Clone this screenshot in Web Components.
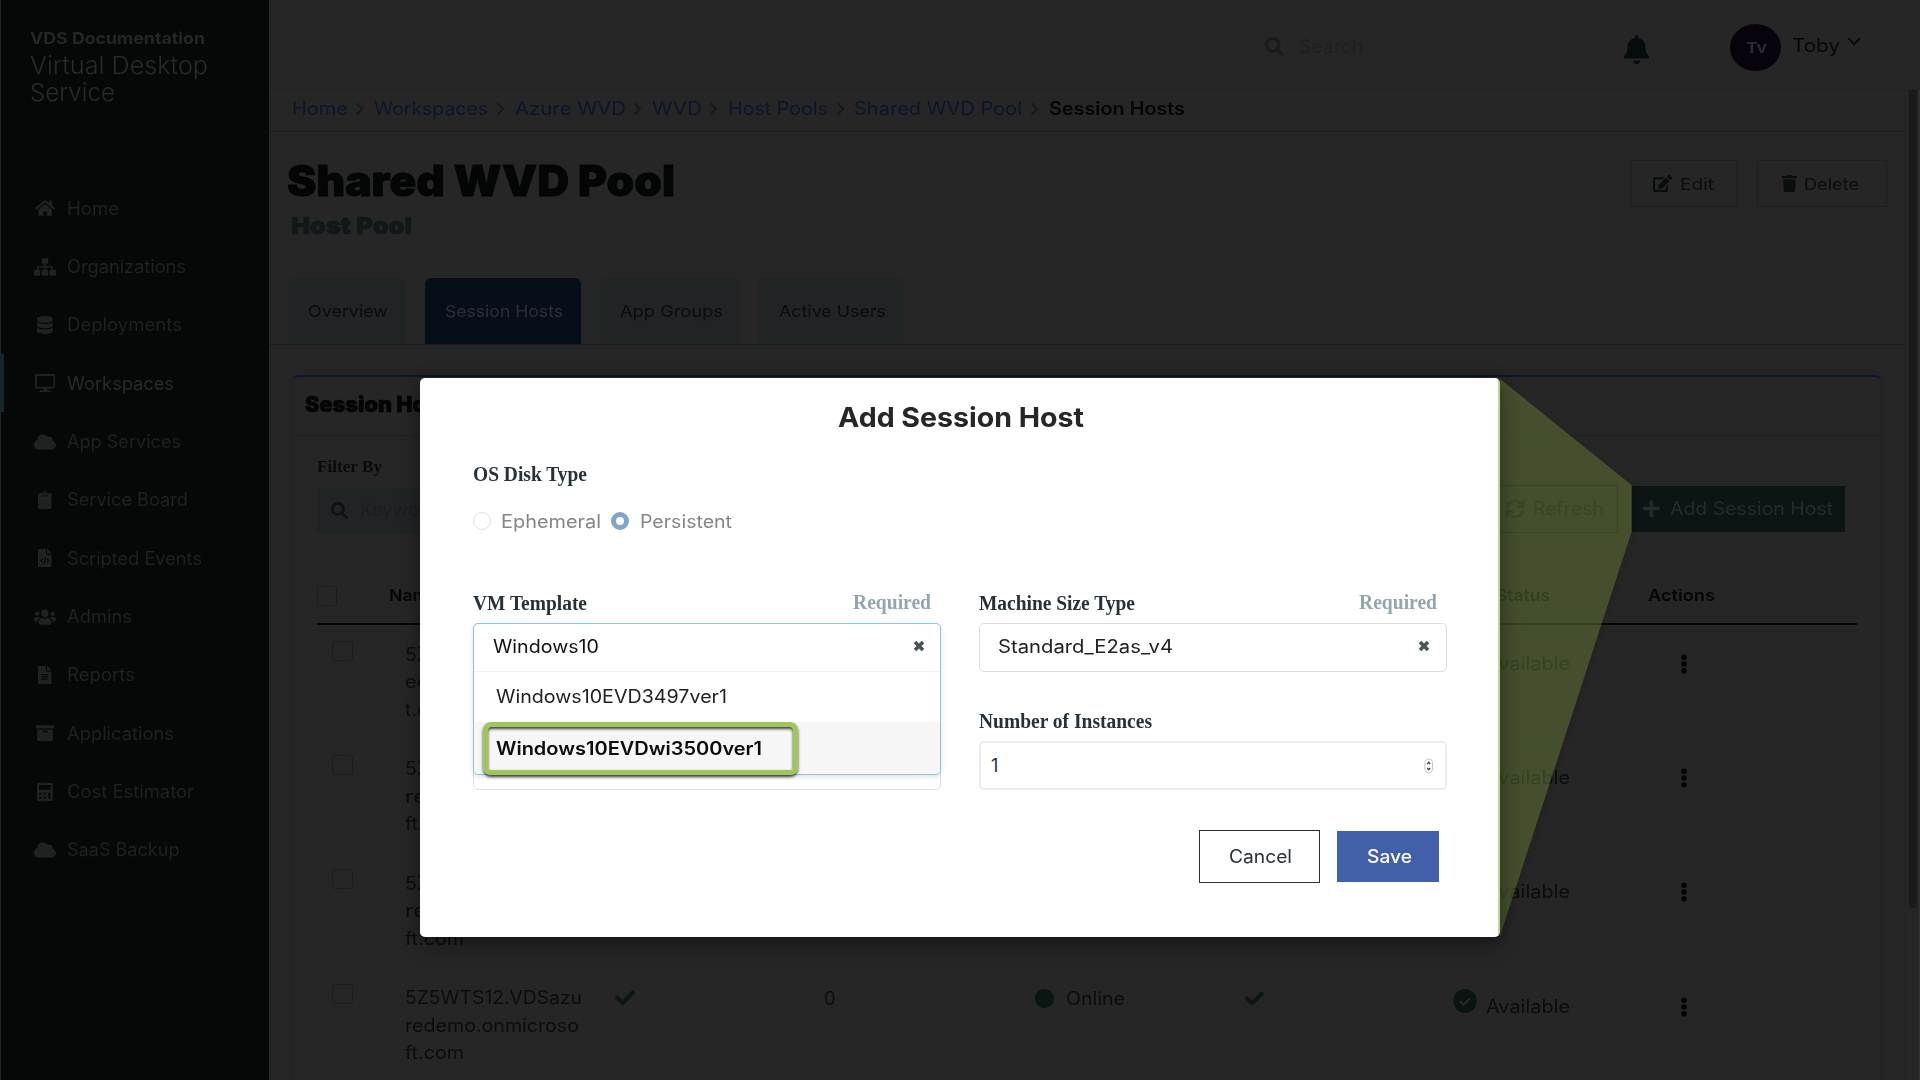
<!DOCTYPE html>
<html lang="en">
<head>
<meta charset="utf-8">
<title>Virtual Desktop Service</title>
<style>
html,body{margin:0;height:100%;overflow:hidden;background:#262626}
body{font-family:Inter,"Liberation Sans",sans-serif;font-size:18px;color:#0a0d0e}
</style>
</head>
<body>
<vds-app></vds-app>
<script>
const ICONS = {
  home:['0 0 576 512','<path d="M280.37 148.26L96 300.11V464a16 16 0 0 0 16 16l112.06-.29a16 16 0 0 0 15.92-16V368a16 16 0 0 1 16-16h64a16 16 0 0 1 16 16v95.64a16 16 0 0 0 16 16.05L464 480a16 16 0 0 0 16-16V300L295.67 148.26a12.19 12.19 0 0 0-15.3 0zM571.6 251.47L488 182.56V44.05a12 12 0 0 0-12-12h-56a12 12 0 0 0-12 12v72.61L318.47 43a48 48 0 0 0-61 0L4.34 251.47a12 12 0 0 0-1.6 16.9l25.5 31A12 12 0 0 0 45.15 301l235.22-193.74a12.19 12.19 0 0 1 15.3 0L530.9 301a12 12 0 0 0 16.9-1.6l25.5-31a12 12 0 0 0-1.7-16.93z"/>'],
  sitemap:['0 0 640 512','<rect x="224" y="0" width="192" height="160" rx="28"/><path d="M296 160h48v64h176a32 32 0 0 1 32 32v80h-48v-64H344v64h-48v-64H136v64H88v-80a32 32 0 0 1 32-32h176z"/><rect x="0" y="336" width="184" height="176" rx="28"/><rect x="228" y="336" width="184" height="176" rx="28"/><rect x="456" y="336" width="184" height="176" rx="28"/>'],
  database:['0 0 448 512','<path d="M448 73.143v45.714C448 159.143 347.667 192 224 192S0 159.143 0 118.857V73.143C0 32.857 100.333 0 224 0s224 32.857 224 73.143zM448 176v102.857C448 319.143 347.667 352 224 352S0 319.143 0 278.857V176c48.125 33.143 136.208 48.572 224 48.572S399.874 209.143 448 176zm0 160v102.857C448 479.143 347.667 512 224 512S0 479.143 0 438.857V336c48.125 33.143 136.208 48.572 224 48.572S399.874 369.143 448 336z"/>'],
  desktop:['0 0 576 512','<path d="M528 0H48C21.5 0 0 21.5 0 48v320c0 26.5 21.5 48 48 48h192l-16 48h-72c-13.3 0-24 10.7-24 24s10.7 24 24 24h272c13.3 0 24-10.7 24-24s-10.7-24-24-24h-72l-16-48h192c26.5 0 48-21.5 48-48V48c0-26.5-21.5-48-48-48zm-6 362H54V54h468v308z"/>'],
  cloud:['0 0 640 512','<path d="M537.6 226.6c4.1-10.7 6.4-22.4 6.4-34.6 0-53-43-96-96-96-19.7 0-38.1 6-53.3 16.2C367 64.2 315.3 32 256 32c-88.4 0-160 71.6-160 160 0 2.7.1 5.4.2 8.1C40.2 219.8 0 273.2 0 336c0 79.5 64.5 144 144 144h368c70.7 0 128-57.3 128-128 0-61.9-44-113.6-102.4-125.4z"/>'],
  clipboard:['0 0 384 512','<path fill-rule="evenodd" d="M336 64h-80c0-35.300-28.700-64-64-64s-64 28.700-64 64H48C21.500 64 0 85.500 0 112v352c0 26.500 21.500 48 48 48h288c26.500 0 48-21.500 48-48V112c0-26.500-21.500-48-48-48zM192 40c13.300 0 24 10.700 24 24s-10.700 24-24 24-24-10.700-24-24 10.700-24 24-24zM108 128h168c7 0 12 5 12 10s-5 10-12 10H108c-7 0-12-5-12-10s5-10 12-10z"/>'],
  filecode:['0 0 384 512','<path d="M384 122v6H256V0h6c7 0 12 3 17 7l98 98c4 4 7 10 7 17z"/><path fill-rule="evenodd" d="M224 0v136c0 13 11 24 24 24h136v328c0 13-11 24-24 24H24c-13 0-24-11-24-24V24C0 11 11 0 24 0zM120 262l-64 68 64 68 24-24-42-44 42-44zM204 240l-54 186 32 10 54-186zM264 262l-24 24 42 44-42 44 24 24 64-68z"/>'],
  file:['0 0 384 512','<path d="M384 122v6H256V0h6c7 0 12 3 17 7l98 98c4 4 7 10 7 17z"/><path fill-rule="evenodd" d="M224 0v136c0 13 11 24 24 24h136v328c0 13-11 24-24 24H24c-13 0-24-11-24-24V24C0 11 11 0 24 0zM96 232v30h192v-30zM96 294v30h192v-30zM96 358v30h192v-30z"/>'],
  users:['0 0 640 512','<path d="M96 224c35.3 0 64-28.7 64-64s-28.7-64-64-64-64 28.7-64 64 28.7 64 64 64zm448 0c35.3 0 64-28.7 64-64s-28.7-64-64-64-64 28.7-64 64 28.7 64 64 64zm32 32h-64c-17.6 0-33.5 7.1-45.1 18.6 40.3 22.1 68.9 62 75.1 109.4h66c17.7 0 32-14.3 32-32v-32c0-35.300-28.700-64-64-64zm-256 0c61.900 0 112-50.100 112-112S381.900 32 320 32 208 82.100 208 144s50.100 112 112 112zm76.800 32h-8.300c-20.800 10-43.900 16-68.500 16s-47.600-6-68.500-16h-8.300C179.600 288 128 339.600 128 403.200V432c0 26.500 21.500 48 48 48h288c26.500 0 48-21.500 48-48v-28.800c0-63.600-51.600-115.200-115.200-115.200zm-223.700-13.400C161.500 263.100 145.600 256 128 256H64c-35.300 0-64 28.700-64 64v32c0 17.700 14.300 32 32 32h65.900c6.300-47.400 34.900-87.300 75.200-109.400z"/>'],
  archive:['0 0 512 512','<rect x="0" y="32" width="512" height="96" rx="20"/><path fill-rule="evenodd" d="M32 160h448v288c0 18-14 32-32 32H64c-18 0-32-14-32-32zM192 204v20c0 7 5 12 12 12h104c7 0 12-5 12-12v-20c0-7-5-12-12-12H204c-7 0-12 5-12 12z"/>'],
  calculator:['0 0 448 512','<path fill-rule="evenodd" d="M40 0h368c22 0 40 18 40 40v432c0 22-18 40-40 40H40c-22 0-40-18-40-40V40C0 18 18 0 40 0zM60 60v132h328V60zM64 268v56h56v-56zM188 268v56h56v-56zM64 392v56h56v-56zM188 392v56h56v-56zM320 268v180h60V268z"/>'],
  search:['0 0 512 512','<path d="M505 442.7L405.3 343c-4.500-4.500-10.600-7-17-7H372c27.600-35.300 44-79.700 44-128C416 93.100 322.900 0 208 0S0 93.100 0 208s93.100 208 208 208c48.300 0 92.700-16.400 128-44v16.300c0 6.400 2.500 12.500 7 17l99.700 99.700c9.400 9.400 24.600 9.400 33.900 0l28.300-28.300c9.400-9.400 9.400-24.600.1-34zM208 336c-70.700 0-128-57.200-128-128 0-70.700 57.200-128 128-128 70.700 0 128 57.200 128 128 0 70.700-57.200 128-128 128z"/>'],
  bell:['0 0 448 512','<path d="M224 512c35.320 0 63.970-28.650 63.970-64H160.030c0 35.350 28.650 64 63.970 64zm215.390-149.710c-19.320-20.760-55.470-51.990-55.470-154.290 0-77.700-54.480-139.900-127.940-155.160V32c0-17.670-14.320-32-31.980-32s-31.980 14.330-31.980 32v20.840C118.560 68.100 64.080 130.300 64.080 208c0 102.300-36.150 133.530-55.470 154.290-6 6.450-8.660 14.160-8.610 21.710.11 16.400 12.980 32 32.100 32h383.800c19.120 0 32-15.600 32.100-32 .05-7.550-2.610-15.270-8.610-21.710z"/>'],
  edit:['0 0 576 512','<path d="M402.6 83.2l90.2 90.2c3.8 3.8 3.8 10 0 13.8L274.4 405.6l-92.8 10.3c-12.400 1.400-22.900-9.100-21.500-21.500l10.300-92.800L388.800 83.200c3.800-3.800 10-3.800 13.800 0zm162-22.900l-48.800-48.800c-15.200-15.200-39.900-15.200-55.200 0l-35.400 35.400c-3.800 3.800-3.800 10 0 13.800l90.200 90.200c3.800 3.800 10 3.800 13.800 0l35.400-35.400c15.200-15.300 15.200-40 0-55.200zM384 346.200V448H64V128h229.800c3.200 0 6.200-1.300 8.500-3.500l40-40c7.600-7.600 2.200-20.500-8.500-20.500H48C21.500 64 0 85.500 0 112v352c0 26.500 21.500 48 48 48h352c26.500 0 48-21.500 48-48V306.200c0-10.700-12.900-16-20.500-8.500l-40 40c-2.200 2.300-3.500 5.300-3.500 8.500z"/>'],
  trash:['0 0 448 512','<path d="M432 32H312l-9.400-18.700A24 24 0 0 0 281.100 0H166.800a23.720 23.720 0 0 0-21.400 13.300L136 32H16A16 16 0 0 0 0 48v32a16 16 0 0 0 16 16h416a16 16 0 0 0 16-16V48a16 16 0 0 0-16-16zM32 128l21.200 339a48 48 0 0 0 47.900 45h245.800a48 48 0 0 0 47.900-45L416 128z"/>'],
  plus:['0 0 448 512','<path d="M416 208H272V64c0-17.670-14.330-32-32-32h-32c-17.670 0-32 14.330-32 32v144H32c-17.670 0-32 14.330-32 32v32c0 17.670 14.330 32 32 32h144v144c0 17.670 14.330 32 32 32h32c17.670 0 32-14.330 32-32V304h144c17.670 0 32-14.330 32-32v-32c0-17.670-14.330-32-32-32z"/>'],
  check:['0 0 512 512','<path d="M173.898 439.404l-166.400-166.400c-9.997-9.997-9.997-26.206 0-36.204l36.203-36.204c9.997-9.998 26.207-9.998 36.204 0L192 312.690 432.095 72.596c9.997-9.997 26.207-9.997 36.204 0l36.203 36.204c9.997 9.997 9.997 26.206 0 36.204l-294.400 294.401c-9.998 9.997-26.207 9.997-36.204-.001z"/>'],
  sync:['0 0 20 20','<g fill="none" stroke="currentColor" stroke-width="2.7"><path d="M2 9A8 8 0 0 1 16.600 5.600"/><path d="M18 11A8 8 0 0 1 3.400 14.400"/><path d="M18.300 1V7.600H11.600"/><path d="M1.700 19V12.400H8.400"/></g>'],
  chev:['0 0 10 16','<path d="M1.800 1.500L8 8l-6.200 6.500" fill="none" stroke="currentColor" stroke-width="2.400"/>'],
  down:['0 0 16 10','<path d="M1.500 1.200L8 8l6.500-6.800" fill="none" stroke="currentColor" stroke-width="2"/>'],
  times:['0 0 12 12','<path d="M2 2l8 8M10 2l-8 8" fill="none" stroke="currentColor" stroke-width="3.600"/>'],
  ok:['0 0 24 24','<ellipse cx="12" cy="12" rx="11.600" ry="12"/><path d="M6.900 12.200l3.700 3.600 6.500-6.500" fill="none" stroke="#262929" stroke-width="2"/>'],
  dots:['0 0 6 20','<circle cx="3" cy="3.300" r="2.800"/><circle cx="3" cy="10" r="2.800"/><circle cx="3" cy="16.700" r="2.800"/>'],
  spin:['0 0 10 16','<rect x=".9" y=".9" width="7.600" height="14" rx="3.800" fill="#fff" stroke="#c4c4c4"/><path d="M3.200 6.200l1.500-2 1.500 2M3.200 9.800l1.500 2 1.500-2" fill="none" stroke="#333" stroke-width="1.200"/>']
};
class Base extends HTMLElement{
  connectedCallback(){
    if(this.shadowRoot) return;
    this.attachShadow({mode:'open'}).innerHTML = `<style>*{box-sizing:border-box}${this.css()}</style>${this.html()}`;
  }
  a(n,d=''){return this.getAttribute(n) ?? d}
  css(){return ''}
  html(){return '<slot></slot>'}
}
const def=(n,css,html)=>customElements.define(n,class extends Base{css(){return typeof css==='function'?css(this):css}html(){return typeof html==='function'?html(this):html}});
const T=(text,w)=>`<fit-text w="${w}">${text}</fit-text>`;

def('vds-icon',e=>`:host{display:inline-flex;flex:none;align-items:center;justify-content:center}svg{display:block;height:${e.a('h','18')}px;${e.a('w')?`width:${e.a('w')}px`:''}}`,
  e=>{const [v,b]=ICONS[e.a('name')];return `<svg viewBox="${v}" fill="currentColor" ${e.a('w')?'preserveAspectRatio="none"':''}>${b}</svg>`});

customElements.define('vds-sidebar',class extends Base{
  css(){return `:host{display:flex;flex-direction:column;width:269px;flex:none;height:1080px;background:linear-gradient(90deg,#232424 1px,#060807 1px)}
  .org{font-weight:700;font-size:16.500px;line-height:22px;padding:27px 0 0 30px;color:#252726}
  .prod{font-weight:300;font-size:24.500px;line-height:27px;padding:2.500px 0 0 29.500px;color:#292b2a}
  .prod fit-text{display:block} nav{display:flex;flex-direction:column;margin-top:73.500px}
  .i{display:flex;align-items:center;height:58.350px;padding-left:34px;color:#1f2122}
  .i.on{background:linear-gradient(90deg,#14262a 4px,transparent 4px);color:#292b2b}.i.on vds-icon{color:#1f2122}
  .i vds-icon{width:22px;margin-right:11px}`}
  html(){const n=[['home','Home',50],['sitemap','Organizations',117],['database','Deployments',113],['desktop','Workspaces',105],['cloud','App Services',112],['clipboard','Service Board',119],['filecode','Scripted Events',133],['users','Admins',63],['file','Reports',66],['archive','Applications',105],['calculator','Cost Estimator',125],['cloud','SaaS Backup',110.500]];
  return `<div class="org">${T('VDS Documentation',173)}</div><div class="prod">${T('Virtual Desktop',176)}${T('Service',83)}</div>
  <nav>${n.map(([i,t,w])=>`<div class="i ${t=='Workspaces'?'on':''}"><vds-icon name="${i}" h="18"></vds-icon>${T(t,w)}</div>`).join('')}</nav>`}
});
def('vds-topbar',`:host{display:flex;align-items:flex-start;justify-content:flex-end;height:90px;border-bottom:1px solid #222323;padding:24px 58px 0 0}
  .s{display:flex;align-items:center;width:308px;height:46px;border:1px solid #232424;padding-left:14px;color:#191b1b;margin-right:66px}
  .s vds-icon{margin-top:-1px}.s fit-text{color:#1f2020;margin:-2px 0 0 15px}.b{color:#060c0d;margin:10px 81px 0 0;height:30px}
  .av{width:51px;height:47px;border-radius:50%;background:#07020c;color:#2b2a2d;font-weight:700;font-size:15px;display:flex;align-items:center;justify-content:center;margin-right:11px}
  .u{display:flex;align-items:center;height:43px;color:#060808;gap:9px}.u vds-icon{margin-top:-9px;margin-right:1px}`,
  `<div class="s"><vds-icon name="search" h="19"></vds-icon>${T('Search',62)}</div><vds-icon class="b" name="bell" h="29" w="25"></vds-icon><div class="av">${T('Tv',19)}</div><div class="u">${T('Toby',46)}<vds-icon name="down" h="9"></vds-icon></div>`);
customElements.define('vds-breadcrumb',class extends Base{
  css(){return `:host{display:flex;height:42px;border-bottom:1px solid #1c1f1f;margin-right:15px;padding-left:23px;line-height:37px;color:#0b162b}
  vds-icon{color:#181a1a;height:38px;margin:0 10px 0 9.300px;width:9px}b{font-weight:600;color:#050606}`}
  html(){return [['Home',54],['Workspaces',112],['Azure WVD',109],['WVD',48],['Host Pools',98],['Shared WVD Pool',166]].map(([t,w])=>T(t,w)+'<vds-icon name="chev" h="14"></vds-icon>').join('')+`<b>${T('Session Hosts',134)}</b>`}
});
def('vds-button',`:host{display:flex;align-items:center;height:47px;border:1px solid #1e2020;font-size:16.500px;color:#0a0d0e;padding-left:22px}::slotted(vds-icon){margin-right:7.500px}`,`<slot></slot>`);
def('vds-page-header',`:host{display:flex;flex-direction:column;height:213px;border-bottom:1px solid #1c1f1f;margin-right:15px}
  .t{display:flex;justify-content:space-between;height:146px;padding:24px 18px 0 18px}
  h1{margin:0;font-size:42px;font-weight:900;line-height:50px;color:#040505;-webkit-text-stroke:.8px}h2{margin:7px 0 0 4px;font-size:23.500px;font-weight:900;line-height:25px;color:#111819;-webkit-text-stroke:.6px}
  .bt{display:flex;gap:19px;padding-top:4px}.tabs{display:flex;padding-left:19px;gap:19px}
  .tabs div{height:66px;border-radius:6px 6px 0 0;background:#212424;display:flex;align-items:center;justify-content:center;font-size:16.500px;padding-bottom:1px;color:#0a0d0e}.tabs .on{background:#060e1a;color:#2b3137}`,
  `<div class="t"><div><h1>${T('Shared WVD Pool',386)}</h1><h2>${T('Host Pool',119)}</h2></div>
  <div class="bt"><vds-button style="width:108px"><vds-icon name="edit" h="17"></vds-icon>${T('Edit',32)}</vds-button><vds-button style="width:130px;padding-left:24px"><vds-icon name="trash" h="17"></vds-icon>${T('Delete',53)}</vds-button></div></div>
  <div class="tabs"><div style="width:118px">${T('Overview',78)}</div><div class="on" style="width:156px">${T('Session Hosts',116)}</div><div style="width:140px">${T('App Groups',101)}</div><div style="width:145px">${T('Active Users',105)}</div></div>`);
def('vds-host-row',`:host{display:grid;grid-template-columns:88px 210px 209px 211px 210px 208px 228px 6px;height:114.400px;border-bottom:1px solid #232424;color:#090d10}
  .cb{width:21px;height:20px;border:1px solid #1d1f1f;border-radius:3px;margin:15.500px 0 0 15px}
  .n{line-height:27.400px;padding-top:16px}.n fit-text{display:block}.c{display:flex;align-items:center;height:60px;color:#0c1613}
  .dot{width:18.500px;height:19px;border-radius:50%;background:#0b1512;margin-right:12.500px}.o{color:#090d10}
  .av{display:flex;align-items:center;height:76px}.av vds-icon{color:#0a1512;margin:-11px 8.500px 0 0}.d{height:77px;color:#040505}`,
  e=>`<div class="cb"></div><div class="n">${e.a('lines').split('|').map(l=>{const[t,w]=l.split('~');return T(t,w)}).join('')}</div>`+
  (e.hasAttribute('status')?`<div class="c"><vds-icon name="check" h="20"></vds-icon></div><div class="c o">${T('0',13)}</div><div class="c"><i class="dot"></i><span class="o">${T('Online',57)}</span></div><div class="c"><vds-icon name="check" h="19"></vds-icon></div>`:'<i></i><i></i><i></i><i></i>')+
  `<div class="av"><vds-icon name="ok" h="24"></vds-icon>${T('Available',82)}</div><vds-icon class="d" name="dots" h="20"></vds-icon>`);
def('vds-hosts-card',`:host{display:block;width:1588px;height:705px;margin:30px 0 0 24px;border-top:2px solid #0c1630;border-radius:6px 6px 0 0;border-left:1px solid #222323;border-right:1px solid #222323;box-shadow:0 0 6px rgba(0,0,0,.12);overflow:hidden}
  .h{height:59px;border-bottom:1px solid #1f2121;padding:13px 0 0 10.500px;font-size:22px;font-weight:900;line-height:28px;color:#040505;-webkit-text-stroke:.5px}
  .f{display:flex;justify-content:space-between;padding:20px 35px 0 23px;height:150px}
  .fb{font:bold 17px/22px "Liberation Serif",serif;color:#080b0c}.k{display:flex;align-items:center;width:330px;height:46px;margin-top:10px;padding-bottom:2px;border-radius:5px;background:#212424;padding-left:14px;color:#0f1212;font-size:17px}.k fit-text{margin-left:12px;color:#1b1e1e}
  .bs{display:flex;gap:14px;padding-top:29px}.r{display:flex;align-items:center;width:136px;height:48px;border:1px solid #0d1613;padding:0 0 1px 22px;gap:8px;color:#0d1613}
  .ad{display:flex;align-items:center;width:213px;height:46px;margin-top:1px;padding-bottom:1px;background:#0c1513;color:#262a29;padding-left:11px;gap:10px}
  .th{display:grid;grid-template-columns:72px 1107px 152px auto;height:39px;margin:0 23px;border-bottom:2px solid #050606;font-weight:600;font-size:16.500px;color:#050707;line-height:18px}
  .th i{width:20px;height:20px;border:1px solid #1d1f1f;border-radius:3px}.tb{padding:0 23px}`,
  `<div class="h">${T('Session Hosts',153)}</div>
  <div class="f"><div><div class="fb">${T('Filter By',63)}</div><div class="k"><vds-icon name="search" h="17"></vds-icon>${T('Keyword',75)}</div></div>
  <div class="bs"><div class="r"><vds-icon name="sync" h="20"></vds-icon>${T('Refresh',69)}</div><div class="ad"><vds-icon name="plus" h="19"></vds-icon>${T('Add Session Host',161)}</div></div></div>
  <div class="th"><i></i>${T('Name',48)}${T('Status',52)}${T('Actions',65)}</div>
  <div class="tb"><vds-host-row lines="5Z5~34|ede~34|t.com~50"></vds-host-row><vds-host-row lines="5Z5~34|red~34|ft.com~57"></vds-host-row><vds-host-row lines="5Z5~34|red~34|ft.com~57"></vds-host-row><vds-host-row status lines="5Z5WTS12.VDSazu~175|redemo.onmicroso~172|ft.com~57"></vds-host-row></div>`);
def('vds-callout',`:host{position:absolute;left:0;top:0;width:1920px;height:1080px;z-index:2}svg{display:block;filter:drop-shadow(0 2px 3px rgba(0,0,0,.35))}`,
  `<svg width="1920" height="1080"><path d="M1500 379L1631.500 485V532L1500 936Z" fill="#788f3f" fill-opacity=".42"/></svg>`);
def('vds-field',`:host{display:flex;flex-direction:column;width:468px}
  .l{display:flex;justify-content:space-between;height:32px;padding-right:12px;font:bold 20px/25px "Liberation Serif",serif;color:#263238}.l .q{color:#93a5ad;line-height:23px}`,
  e=>`<div class="l">${T(e.a('label'),e.a('lw'))}${e.hasAttribute('required')?`<span class="q">${T('Required',76)}</span>`:''}</div><slot></slot>`);
def('vds-modal',`:host{position:absolute;z-index:3;left:420px;top:378px;width:1080px;height:559px;border-radius:5px;box-shadow:0 6px 20px rgba(0,0,0,.45);display:flex;flex-direction:column;color:#212121;background:linear-gradient(90deg,#fff 1078px,#c2d29d 1078px)}
  h3{margin:23px 0 0;font-size:27px;line-height:34px;font-weight:700;color:#262626;display:flex;justify-content:center}
  .os{font:bold 20px/24px "Liberation Serif",serif;color:#263238;margin:26px 0 0 53px;height:24px;padding-top:1px}
  .rad{display:flex;align-items:center;height:30px;margin:21px 0 0 53px;color:#868686}
  .rad i{width:18px;height:18px;border-radius:50%;border:1px solid #e2e2e2;margin-right:10px}.rad i.on{border:5px solid #7ea6c8;margin-left:12px;margin-right:11px}
  .g{display:grid;grid-template-columns:468px 468px;column-gap:38px;margin:52px 0 0 53px;height:246px;padding-top:3px}
  .col{display:flex;flex-direction:column}
  .sel{height:49px;border:1px solid #ddd;border-radius:5px;display:flex;justify-content:space-between;align-items:center;padding:0 16px 3px 18px;color:#212121}
  .sel vds-icon,.in vds-icon{color:#4a5458}
  .wrap{position:relative;height:167px;border:1px solid #ddd;border-radius:5px}
  .dd{position:absolute;left:-1px;top:-1px;width:468px;height:152px;border:1px solid #8cc6da;border-radius:5px;background:#fff;box-shadow:0 2px 5px rgba(0,0,0,.12);color:#212121}
  .in{height:48px;border-bottom:1px solid #f2f2f2;display:flex;justify-content:space-between;align-items:center;padding:0 15px 3px 19px;color:#111}
  .o1{height:50px;padding-left:22px;line-height:50px}.o2{height:52px;background:#f6f6f6;padding-left:22px;line-height:53px;font-weight:600;color:#0c0c0c;border-radius:0 0 5px 5px}
  .hl{position:absolute;left:9px;top:98px;width:315px;height:53px;border:5px solid #9fc65a;border-radius:8px;box-shadow:0 2px 3px rgba(0,0,0,.75),inset 0 2px 3px rgba(0,0,0,.75)}
  .num{height:49px;border:2px solid #e9edf1;border-radius:5px;display:flex;align-items:center;justify-content:space-between;padding:0 11px 0 10px;color:#263238}
  .btns{display:flex;justify-content:flex-end;align-items:center;gap:17px;padding-right:61px;margin-top:-4px;height:53px}
  .c{width:121px;height:53px;border:1px solid #263238;display:flex;align-items:center;justify-content:center;color:#263238}.s{width:102px;height:51px;background:#4260a7;color:#fff;font-weight:500;display:flex;align-items:center;justify-content:center}`,
  `<h3>${T('Add Session Host',244)}</h3><div class="os">${T('OS Disk Type',112)}</div>
  <div class="rad"><i></i>${T('Ephemeral',98)}<i class="on"></i>${T('Persistent',90)}</div>
  <div class="g"><vds-field label="VM Template" lw="112" required><div class="wrap"><div class="dd"><div class="in">${T('Windows10',104)}<vds-icon name="times" h="12"></vds-icon></div><div class="o1">${T('Windows10EVD3497ver1',229)}</div><div class="o2">${T('Windows10EVDwi3500ver1',264)}</div><div class="hl"></div></div></div></vds-field>
  <div class="col"><vds-field label="Machine Size Type" lw="154" required><div class="sel">${T('Standard_E2as_v4',173)}<vds-icon name="times" h="12"></vds-icon></div></vds-field>
  <vds-field style="margin-top:37px" label="Number of Instances" lw="171"><div class="num">${T('1',7)}<vds-icon name="spin" h="16"></vds-icon></div></vds-field></div></div>
  <div class="btns"><div class="c">${T('Cancel',61)}</div><div class="s">${T('Save',43)}</div></div>`);
def('vds-scrollbar',`:host{position:absolute;left:1904px;top:90px;width:16px;height:990px;border-left:1px solid #222323;border-right:1px solid #333;padding-left:4px;z-index:1}div{width:8px;height:818px;background:#1b1b1b;border-radius:0 0 4px 4px}`,`<div></div>`);
def('vds-app',`:host{display:flex;position:relative;width:1920px;height:1080px;overflow:hidden;background:#262626}main{flex:1;display:flex;flex-direction:column;min-width:0}`,
  `<vds-sidebar></vds-sidebar><main><vds-topbar></vds-topbar><vds-breadcrumb></vds-breadcrumb><vds-page-header></vds-page-header><vds-hosts-card></vds-hosts-card></main><vds-scrollbar></vds-scrollbar><vds-callout></vds-callout><vds-modal></vds-modal>`);
/* Widens (or narrows) the letters of a label so that it spans the width given in "w". */
customElements.define('fit-text',class extends Base{
  css(){return `:host{display:inline-block;flex:none;white-space:nowrap;width:${this.a('w')}px}span{display:inline-block;transform-origin:0 50%;margin-right:-30px}`}
  html(){return '<span><slot></slot></span>'}
  connectedCallback(){
    super.connectedCallback();
    const s=this.shadowRoot.querySelector('span');
    if(this.textContent.length>1)s.style.transform=`scaleX(${((+this.a('w')+2)/s.getBoundingClientRect().width).toFixed(4)})`;
  }
});
</script>
</body>
</html>
